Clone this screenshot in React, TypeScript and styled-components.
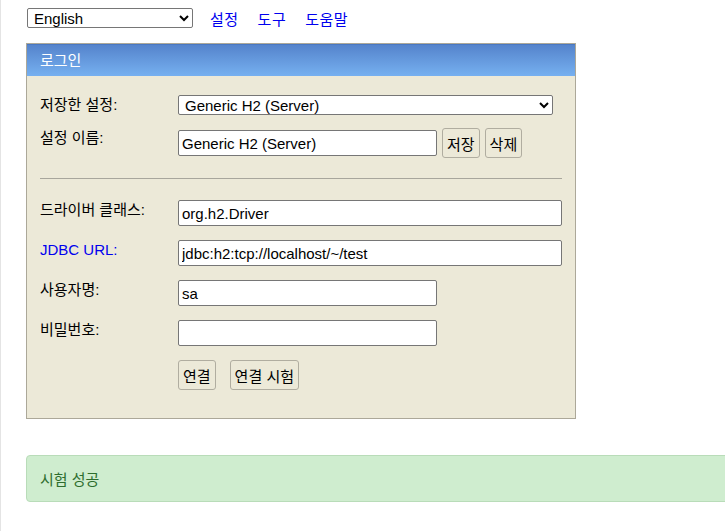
import React from 'react'
import styled, { createGlobalStyle } from 'styled-components'

const GlobalStyle = createGlobalStyle`
  html, body {
    margin: 0;
    padding: 0;
    overflow: hidden;
    background: #ffffff;
  }
  body {
    font-family: "Liberation Sans", "Noto Sans CJK KR", Arial, sans-serif;
    font-size: 15px;
    color: #000;
  }
`

const Page = styled.div`
  min-height: 100vh;
  border-left: 1px solid #e4e4e4;
  padding: 8px 0 0 25px;
  box-sizing: border-box;
`

const TopBar = styled.div`
  display: flex;
  align-items: center;
  gap: 17px;
  height: 20px;
  padding-left: 1px;
`

const LangSelect = styled.select`
  width: 166px;
  height: 20px;
  font: 15px "Liberation Sans", "Noto Sans CJK KR", sans-serif;
  border: 1px solid #767676;
  border-radius: 2px;
  background: #fff;
  padding: 0 2px;
`

const NavLinks = styled.div`
  display: flex;
  gap: 19px;
`

const NavLink = styled.a`
  color: #0000ee;
  text-decoration: none;
  font-size: 15px;
  letter-spacing: 0.5px;
`

const Panel = styled.div`
  margin-top: 15px;
  width: 550px;
  box-sizing: border-box;
  border: 1px solid #aca899;
  background: #ece9d8;
`

const PanelHeader = styled.div`
  height: 32px;
  box-sizing: border-box;
  border-top: 1px solid #4a78c2;
  background: linear-gradient(to bottom, #5584cc, #76b0f0);
  color: #ffffff;
  font-size: 15px;
  display: flex;
  align-items: center;
  padding: 0 0 3px 13px;
`

const PanelBody = styled.div`
  padding: 19px 13px 28px 13px;
`

const Row = styled.div<{ $top?: number }>`
  display: grid;
  grid-template-columns: 138px 1fr;
  align-items: start;
  margin-top: ${p => p.$top ?? 0}px;
`

const Label = styled.div<{ $link?: boolean; $pad?: number }>`
  color: ${p => (p.$link ? '#0000ee' : '#000')};
  padding-top: ${p => p.$pad ?? 0}px;
  line-height: 18px;
  white-space: nowrap;
`

const Field = styled.div`
  display: flex;
  align-items: center;
  gap: 5px;
`

const Select = styled.select`
  width: 375px;
  height: 20px;
  font: 15px "Liberation Sans", "Noto Sans CJK KR", sans-serif;
  border: 1px solid #767676;
  border-radius: 2px;
  background: #fff;
  padding: 0 2px;
`

const Input = styled.input<{ $short?: boolean }>`
  width: ${p => (p.$short ? 259 : 384)}px;
  height: 26px;
  box-sizing: border-box;
  font: 15px "Liberation Sans", "Noto Sans CJK KR", sans-serif;
  color: #000;
  border: 1px solid #767676;
  border-radius: 2px;
  background: #fff;
  padding: 0 3px;
  outline: none;
`

const Button = styled.button`
  height: 30px;
  box-sizing: border-box;
  padding: 0 4px;
  font: 15px "Liberation Sans", "Noto Sans CJK KR", sans-serif;
  color: #000;
  background: #ece9d8;
  border: 1px solid #b0ada0;
  border-radius: 3px;
`

const Divider = styled.hr`
  margin: 20px 0 21px 0;
  border: none;
  border-top: 1px solid #a8a69c;
  height: 0;
`

const Buttons = styled.div`
  display: flex;
  gap: 14px;
`

const Notice = styled.div`
  margin-top: 36px;
  width: 720px;
  height: 47px;
  box-sizing: border-box;
  background: #cfedcf;
  border: 1px solid #b9dcb9;
  border-radius: 4px;
  color: #2e6d2e;
  display: flex;
  align-items: center;
  padding-left: 13px;
  font-size: 15px;
`

export default function App() {
  return (
    <>
      <GlobalStyle />
      <Page>
        <TopBar>
          <LangSelect defaultValue="en">
            <option value="en">English</option>
          </LangSelect>
          <NavLinks>
            <NavLink href="#">설정</NavLink>
            <NavLink href="#">도구</NavLink>
            <NavLink href="#">도움말</NavLink>
          </NavLinks>
        </TopBar>

        <Panel>
          <PanelHeader>로그인</PanelHeader>
          <PanelBody>
            <Row>
              <Label $pad={1}>저장한 설정:</Label>
              <Field>
                <Select defaultValue="srv">
                  <option value="srv">Generic H2 (Server)</option>
                </Select>
              </Field>
            </Row>
            <Row $top={13}>
              <Label $pad={1}>설정 이름:</Label>
              <Field>
                <Input $short defaultValue="Generic H2 (Server)" />
                <Button>저장</Button>
                <Button>삭제</Button>
              </Field>
            </Row>

            <Divider />

            <Row>
              <Label $pad={1}>드라이버 클래스:</Label>
              <Input defaultValue="org.h2.Driver" />
            </Row>
            <Row $top={14}>
              <Label $link $pad={1}>JDBC URL:</Label>
              <Input defaultValue="jdbc:h2:tcp://localhost/~/test" />
            </Row>
            <Row $top={14}>
              <Label $pad={1}>사용자명:</Label>
              <Input $short defaultValue="sa" />
            </Row>
            <Row $top={14}>
              <Label $pad={1}>비밀번호:</Label>
              <Input $short type="password" />
            </Row>
            <Row $top={14}>
              <span />
              <Buttons>
                <Button>연결</Button>
                <Button>연결 시험</Button>
              </Buttons>
            </Row>
          </PanelBody>
        </Panel>

        <Notice>시험 성공</Notice>
      </Page>
    </>
  )
}
